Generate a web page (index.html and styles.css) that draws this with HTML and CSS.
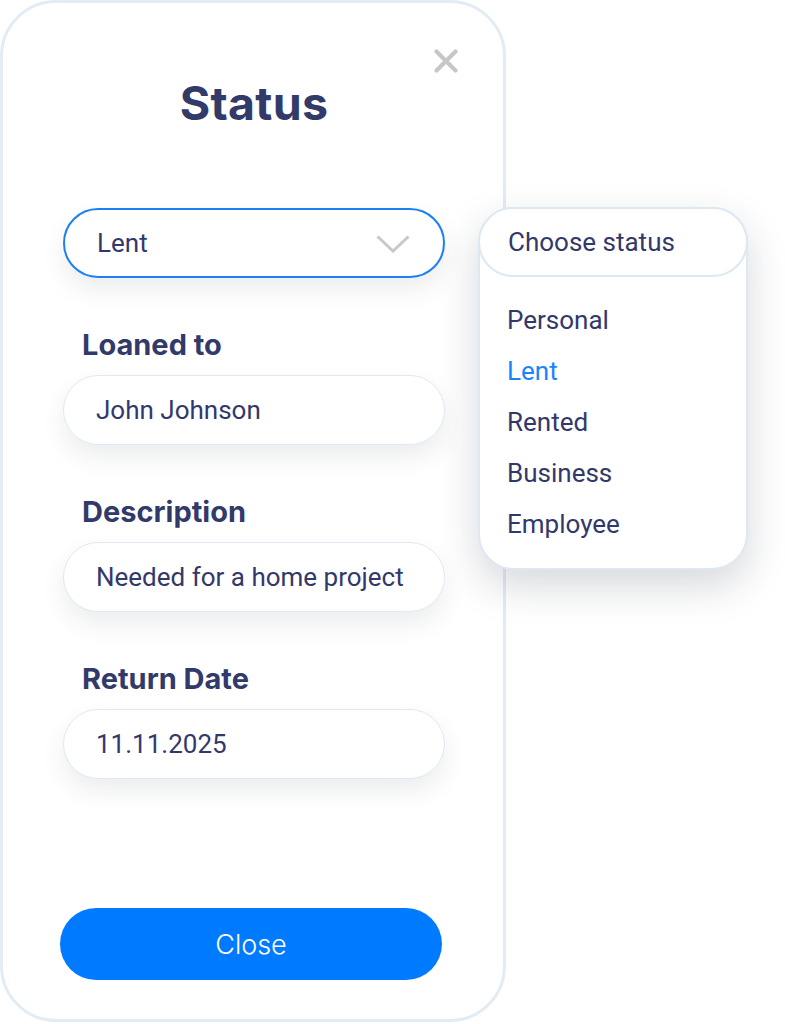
FILE: index.html
```html
<!DOCTYPE html>
<html lang="en">
<head>
<meta charset="utf-8">
<title>Status</title>
<link rel="stylesheet" href="styles.css">
</head>
<body>
<div class="stage">
  <section class="card">
    <button class="close-x" aria-label="Close">
      <svg width="24" height="24" viewBox="0 0 24 24"><path d="M2.5 2.5 L21.5 21.5 M21.5 2.5 L2.5 21.5" stroke="#c6c7c9" stroke-width="4.2" stroke-linecap="round" fill="none"/></svg>
    </button>
    <h1 class="title">Status</h1>
    <div class="select">
      <span class="value">Lent</span>
      <svg class="chev" width="34" height="18" viewBox="0 0 34 18"><path d="M1.5 1.5 L17 16 L32.5 1.5" stroke="#c8c8ca" stroke-width="3" fill="none"/></svg>
    </div>
    <div class="group first">
      <label class="label">Loaned to</label>
      <div class="field">John Johnson</div>
    </div>
    <div class="group">
      <label class="label">Description</label>
      <div class="field">Needed for a home project</div>
    </div>
    <div class="group">
      <label class="label">Return Date</label>
      <div class="field">11.11.2025</div>
    </div>
    <button class="btn">Close</button>
  </section>
  <div class="menu">
    <div class="menu-head">Choose status</div>
    <ul class="menu-list">
      <li>Personal</li>
      <li class="active">Lent</li>
      <li>Rented</li>
      <li>Business</li>
      <li>Employee</li>
    </ul>
  </div>
</div>
</body>
</html>
```

FILE: styles.css
```css
* { box-sizing: border-box; }
html, body { margin: 0; padding: 0; background: #ffffff; }
body { font-family: Roboto, "Liberation Sans", sans-serif; color: #32396a; }

.stage { position: relative; width: 785px; height: 1024px; }

.card {
  position: relative;
  width: 506px;
  height: 1022px;
  border: 3px solid #e2ecf5;
  border-radius: 56px;
  background: #fff;
  padding: 72px 0 39px 60px;
  display: flex;
  flex-direction: column;
}

.close-x {
  position: absolute;
  top: 46px;
  right: 45px;
  width: 24px;
  height: 24px;
  padding: 0;
  border: 0;
  background: none;
  display: block;
}
.close-x svg { display: block; }

.title {
  margin: 0;
  font-family: Inter, "Noto Sans", sans-serif;
  font-weight: 700;
  font-size: 46.5px;
  line-height: 56px;
  text-align: center;
  width: 382px;
  color: #323a69;
  letter-spacing: 0.3px;
}

.select {
  margin-top: 77px;
  width: 382px;
  height: 70px;
  border: 2px solid #1c80f4;
  border-radius: 35px;
  display: flex;
  align-items: center;
  justify-content: space-between;
  padding: 0 33px 0 32px;
  box-shadow: 0 12px 24px rgba(40, 50, 70, 0.09);
  background: #fff;
}
.value { font-size: 26px; }
.chev { display: block; margin-top: 2px; }

.group { margin-top: 49px; display: flex; flex-direction: column; }
.group.first { margin-top: 49px; }

.label {
  font-family: Inter, "Noto Sans", sans-serif;
  font-weight: 700;
  font-size: 29px;
  line-height: 36px;
  padding-left: 19px;
  color: #323a69;
  margin-bottom: 12px;
}

.field {
  width: 382px;
  height: 70px;
  border: 1.5px solid #dfe9f3;
  border-radius: 35px;
  display: flex;
  align-items: center;
  padding-left: 32px;
  font-size: 26px;
  background: #fff;
  box-shadow: 0 12px 24px rgba(40, 50, 70, 0.09);
}

.btn {
  margin-top: auto;
  margin-left: -3px;
  width: 382px;
  height: 72px;
  border: 0;
  border-radius: 36px;
  background: #007bff;
  color: #fff;
  font-family: Inter, "Noto Sans", sans-serif;
  font-weight: 300;
  font-size: 27px;
  padding: 0;
}

.menu {
  position: absolute;
  left: 478px;
  top: 207px;
  width: 270px;
  height: 363px;
  border: 2px solid #dde8f2;
  border-radius: 36px;
  background: #fff;
  box-shadow: 0 16px 40px rgba(30, 40, 60, 0.18);
}
.menu-head {
  margin: -2px -2px 0;
  height: 70px;
  border: 2px solid #dde8f2;
  border-radius: 35px;
  display: flex;
  align-items: center;
  padding-left: 28px;
  font-size: 26px;
  background: #fff;
}
.menu-list {
  list-style: none;
  margin: 0;
  padding: 18px 0 0 27px;
}
.menu-list li {
  font-size: 26px;
  line-height: 51px;
}
.menu-list li.active { color: #1a84fb; }
```
